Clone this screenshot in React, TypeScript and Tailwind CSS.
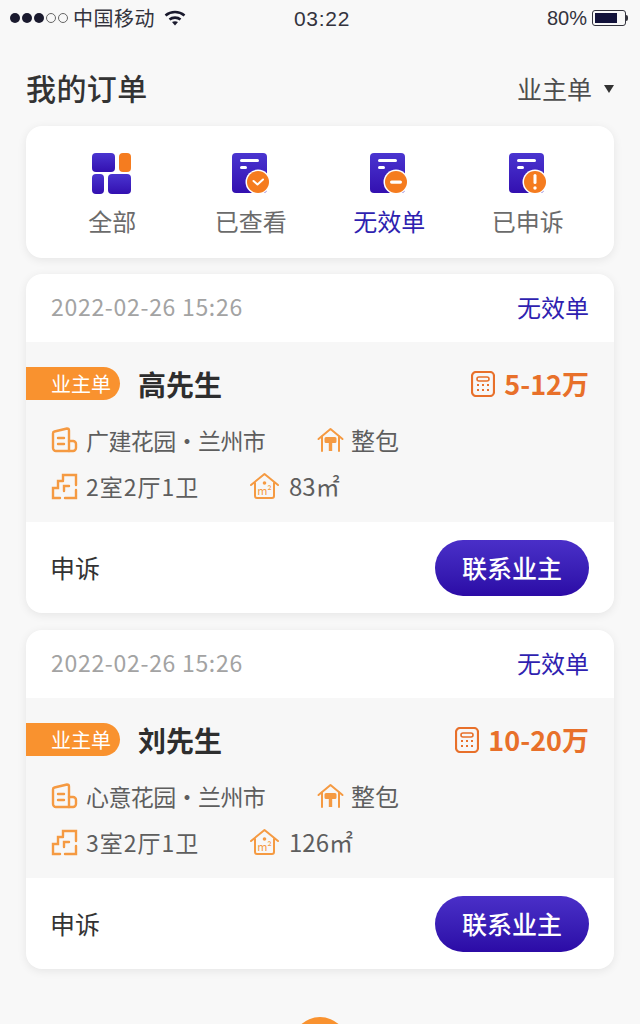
// Order list screen
import React from 'react'

const FONT = 'font-["Noto_Sans_CJK_SC","Noto_Sans",sans-serif]'

const DocIcon: React.FC<{ badge: 'check' | 'minus' | 'alert' }> = ({ badge }) => (
  <svg width="40" height="42" viewBox="0 0 40 42" fill="none">
    <defs>
      <linearGradient id="docFill" x1="0" y1="0" x2="0" y2="1">
        <stop offset="0" stopColor="#4a35d0" />
        <stop offset="1" stopColor="#3310b0" />
      </linearGradient>
    </defs>
    <rect x="1" y="1" width="35" height="40" rx="4" fill="url(#docFill)" />
    <rect x="9" y="7" width="19" height="3" rx="1.5" fill="#fff" />
    <rect x="9" y="14" width="7" height="3" rx="1.5" fill="#fff" />
    <circle cx="27" cy="30" r="12.5" fill="#fff" />
    <circle cx="27" cy="30" r="11" fill="#f57c1f" />
    {badge === 'check' && <path d="M22.5 29l4 3.5 5.5-5" stroke="#fff" strokeWidth="2" strokeLinecap="round" strokeLinejoin="round" />}
    {badge === 'minus' && <rect x="21" y="28.5" width="12" height="3.2" rx="1.6" fill="#fff" />}
    {badge === 'alert' && (
      <>
        <rect x="25.5" y="22" width="3" height="10" rx="1.5" fill="#fff" />
        <circle cx="27" cy="36" r="1.7" fill="#fff" />
      </>
    )}
  </svg>
)

const AllIcon = () => (
  <svg width="40" height="42" viewBox="0 0 40 42" fill="none">
    <defs>
      <linearGradient id="allFill" x1="0" y1="0" x2="0" y2="1">
        <stop offset="0" stopColor="#4a35d0" />
        <stop offset="1" stopColor="#3310b0" />
      </linearGradient>
    </defs>
    <rect x="0" y="1" width="23" height="19" rx="4" fill="url(#allFill)" />
    <rect x="27" y="1" width="12" height="19" rx="4" fill="#f57c1f" />
    <rect x="0" y="22" width="12" height="20" rx="4" fill="url(#allFill)" />
    <rect x="16" y="22" width="23" height="20" rx="4" fill="url(#allFill)" />
  </svg>
)

const tabs = [
  { label: '全部', icon: <AllIcon /> },
  { label: '已查看', icon: <DocIcon badge="check" /> },
  { label: '无效单', icon: <DocIcon badge="minus" />, active: true },
  { label: '已申诉', icon: <DocIcon badge="alert" /> },
]

const stroke = {
  fill: 'none',
  stroke: '#f59a42',
  strokeWidth: 2.4,
  strokeLinecap: 'round' as const,
  strokeLinejoin: 'round' as const,
}

const BuildingIcon = () => (
  <svg width="27" height="26" viewBox="0 0 27 26" {...stroke}>
    <path d="M2 6.5a2 2 0 011.5-2L16 1.5a2 2 0 012 2V24H5a3 3 0 01-3-3z" />
    <path d="M7 11h6M7 17h6M18 14h4a3 3 0 013 3v4a3 3 0 01-3 3h-4" />
  </svg>
)

const RoofIcon = () => (
  <svg width="27" height="26" viewBox="0 0 27 26" {...stroke} strokeWidth="2">
    <path d="M1.5 12L13.5 2l12 10" />
    <path d="M5 9.5V24M22 9.5V24" />
    <rect x="8.5" y="11" width="10" height="4" rx="0.5" fill="#f59a42" />
    <path d="M13.5 15v9" strokeWidth="3.4" strokeLinecap="butt" />
  </svg>
)

const PlanIcon = () => (
  <svg width="27" height="28" viewBox="0 0 27 28" {...stroke} strokeLinejoin="miter">
    <path d="M12 8V3h13v10" />
    <path d="M25 18v8H14" />
    <path d="M9 26H2v-10h5V9h5" />
    <path d="M18 14h-5v5" />
  </svg>
)

const AreaIcon = () => (
  <svg width="29" height="28" viewBox="0 0 29 28" {...stroke} strokeWidth="2">
    <path d="M1 13L14.5 2 28 13" />
    <path d="M5 11v13a2 2 0 002 2h15a2 2 0 002-2V11" />
    <circle cx="14.5" cy="11" r="1.8" fill="#f59a42" stroke="none" />
    <text x="14.5" y="23" textAnchor="middle" fontSize="11" fill="#f59a42" stroke="none">
      m²
    </text>
  </svg>
)

const CalcIcon = () => (
  <svg width="24" height="26" viewBox="0 0 24 26" fill="none" stroke="#e8702a" strokeWidth="2.2">
    <rect x="1" y="1" width="22" height="24" rx="4" />
    <rect x="6" y="6" width="12" height="4" rx="2" strokeWidth="1.6" />
    <path d="M6 14h2M11 14h2M16 14h2M6 19h2M11 19h2M16 19h2" strokeWidth="2.2" />
  </svg>
)

interface Order {
  name: string
  budget: string
  community: string
  rooms: string
  area: string
}

const orders: Order[] = [
  { name: '高先生', budget: '5-12万', community: '广建花园·兰州市', rooms: '2室2厅1卫', area: '83㎡' },
  { name: '刘先生', budget: '10-20万', community: '心意花园·兰州市', rooms: '3室2厅1卫', area: '126㎡' },
]

const OrderCard: React.FC<{ order: Order }> = ({ order }) => (
  <div className="overflow-hidden rounded-2xl bg-white shadow-[0_2px_10px_rgba(0,0,0,0.08)]">
    <div className="flex h-[68px] items-center justify-between px-[25px] pb-[3px]">
      <span className="text-[23px] tracking-[0.7px] text-[#a3a3a3]">2022-02-26 15:26</span>
      <span className="text-[24px] text-[#2f1fb0]">无效单</span>
    </div>

    <div className="h-[180px] bg-[#f7f7f7] pt-[25px]">
      <div className="flex items-center justify-between pr-[25px]">
        <div className="flex items-center gap-[18px]">
          <span className="flex h-[33px] w-[94px] items-center justify-end rounded-r-full bg-[#f9922f] pr-[9px] text-[20px] text-white">
            业主单
          </span>
          <span className="text-[28px] leading-none font-bold text-[#2e2e2e]">{order.name}</span>
        </div>
        <div className="flex items-center gap-[9px]">
          <CalcIcon />
          <span className="text-[27px] leading-none font-bold text-[#e8702a]">{order.budget}</span>
        </div>
      </div>

      <div className="mt-[24px] flex h-[32px] items-center pl-[25px] text-[23px] text-[#5e5e5e]">
        <div className="flex w-[266px] items-center gap-[8px]">
          <BuildingIcon />
          <span className="tracking-[-0.6px]">{order.community}</span>
        </div>
        <div className="flex items-center gap-[7px]">
          <RoofIcon />
          <span className="text-[24px]">整包</span>
        </div>
      </div>

      <div className="mt-[14px] flex h-[32px] items-center pl-[25px] text-[23px] text-[#5e5e5e]">
        <div className="flex w-[199px] items-center gap-[8px]">
          <PlanIcon />
          <span className="tracking-[1px]">{order.rooms}</span>
        </div>
        <div className="flex items-center gap-[10px]">
          <AreaIcon />
          <span className="text-[24px]">{order.area}</span>
        </div>
      </div>
    </div>

    <div className="flex h-[91px] items-center justify-between pr-[25px] pl-[24px]">
      <span className="text-[25px] text-[#333333]">申诉</span>
      <button className="flex h-[56px] w-[154px] items-center justify-center rounded-full bg-gradient-to-b from-[#4a2fc8] to-[#2c0aa6] text-[25px] font-medium text-white">
        联系业主
      </button>
    </div>
  </div>
)

export default function App() {
  return (
    <div className={`relative h-[1024px] w-[640px] overflow-hidden bg-[#f8f8f8] ${FONT}`}>
      {/* Status bar */}
      <div className="flex h-[36px] items-center justify-between pr-[12px] pl-[10px] text-[#33333d]">
        <div className="flex w-[270px] items-center">
          <div className="flex items-center gap-[2px]">
            {[0, 1, 2].map((i) => (
              <span key={i} className="h-[10px] w-[10px] rounded-full bg-[#1a1a2e]" />
            ))}
            {[0, 1].map((i) => (
              <span key={i} className="h-[10px] w-[10px] rounded-full border border-[#666666]" />
            ))}
          </div>
          <span className="ml-[5px] text-[20px] leading-none tracking-[0.5px]">中国移动</span>
          <svg className="ml-[9px]" width="22" height="16" viewBox="0 0 22 16" fill="none" stroke="#1a1a2e" strokeWidth="2.6">
            <path d="M1.5 5.5c5.5-4.6 13.5-4.6 19 0" />
            <path d="M5.5 9.5c3-2.5 8-2.5 11 0" />
            <path d="M11 15.5l-3-3.5c1.7-1.1 4.3-1.1 6 0z" fill="#1a1a2e" stroke="none" />
          </svg>
        </div>
        <span className='ml-[6px] font-["Liberation_Sans",sans-serif] text-[21px] leading-none tracking-[0.7px]'>03:22</span>
        <div className="flex w-[270px] items-center justify-end">
          <span className='font-["Liberation_Sans",sans-serif] text-[20px] leading-none'>80%</span>
          <div className="ml-[5px] flex h-[16px] w-[34px] items-center rounded-[3px] border border-[#33333d] p-[2px]">
            <div className="h-full w-[22px] bg-[#12123a]" />
          </div>
          <span className="h-[6px] w-[2px] rounded-r-full bg-[#33333d]" />
        </div>
      </div>

      {/* Title row */}
      <div className="mt-[32px] flex h-[42px] items-center justify-between pr-[26px] pl-[26px]">
        <h1 className="pb-[4px] text-[30px] leading-none font-medium tracking-[0.4px] text-[#333333]">我的订单</h1>
        <div className="flex items-center gap-[12px]">
          <span className="pb-[2px] text-[25px] leading-none text-[#4d4d4d]">业主单</span>
          <span className="h-0 w-0 border-x-[5px] border-t-[8px] border-x-transparent border-t-[#333333]" />
        </div>
      </div>

      <div className="mt-[16px] flex flex-col px-[26px]">
        {/* Filter tabs */}
        <div className="grid h-[132px] grid-cols-4 rounded-2xl bg-white px-[17px] shadow-[0_2px_10px_rgba(0,0,0,0.08)]">
          {tabs.map((tab) => (
            <div key={tab.label} className="flex flex-col items-center pt-[26px]">
              {tab.icon}
              <span className={`mt-[11px] text-[24px] leading-[32px] ${tab.active ? 'text-[#2f1fb0]' : 'text-[#6b6b6b]'}`}>
                {tab.label}
              </span>
            </div>
          ))}
        </div>

        <div className="mt-[16px] flex flex-col gap-[17px]">
          {orders.map((order) => (
            <OrderCard key={order.name} order={order} />
          ))}
        </div>
      </div>

      {/* Floating button peeking from the bottom edge */}
      <div className="absolute top-[1017px] left-[292px] h-[56px] w-[56px] rounded-full bg-[#f9922f]" />
    </div>
  )
}
